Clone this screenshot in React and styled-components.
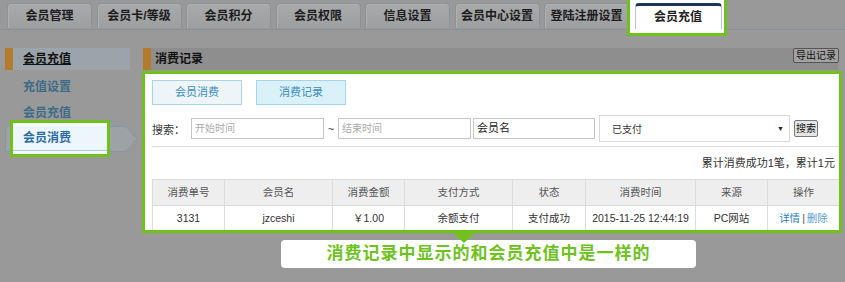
import React from 'react';
import styled, {createGlobalStyle} from 'styled-components';

const green = '#70c11c';

const GlobalStyle = createGlobalStyle`
  html, body {
    margin: 0;
    padding: 0;
    background: #999;
  }
  body {
    font-family: "Liberation Sans", "Noto Sans CJK SC", sans-serif;
  }
`;

const tabs = ['会员管理', '会员卡/等级', '会员积分', '会员权限', '信息设置', '会员中心设置', '登陆注册设置'];
const menu = ['充值设置', '会员充值'];
const columns = [
    {title: '消费单号', width: 72},
    {title: '会员名', width: 108},
    {title: '消费金额', width: 72},
    {title: '支付方式', width: 108},
    {title: '状态', width: 73},
    {title: '消费时间', width: 110},
    {title: '来源', width: 72},
    {title: '操作', width: 72},
];

const App = () => {
    return (
        <Page>
            <GlobalStyle/>
            <TabBar>
                {tabs.map((t) => <Tab key={t}>{t}</Tab>)}
                <ActiveFrame>
                    <ActiveTab>会员充值</ActiveTab>
                </ActiveFrame>
            </TabBar>

            <Body>
                <Sidebar>
                    <SideHead>会员充值</SideHead>
                    <Menu>
                        {menu.map((m) => <MenuItem key={m}>{m}</MenuItem>)}
                        <ActiveItem>
                            <svg width="133" height="26" viewBox="0 0 133 26">
                                <polygon points="0.5,0.5 121,0.5 132,13 121,25.5 0.5,25.5" fill="#9ca2a6" stroke="#8797a3"/>
                            </svg>
                            <ItemFrame>
                                <ItemBand>会员消费</ItemBand>
                            </ItemFrame>
                        </ActiveItem>
                    </Menu>
                </Sidebar>

                <Main>
                    <MainHead>
                        <HeadTitle>消费记录</HeadTitle>
                        <ExportBtn>导出记录</ExportBtn>
                    </MainHead>

                    <ContentFrame>
                        <Content>
                            <ButtonRow>
                                <SubTab>会员消费</SubTab>
                                <SubTab active>消费记录</SubTab>
                            </ButtonRow>

                            <SearchRow>
                                <Label>搜索：</Label>
                                <Field width={133} placeholder>开始时间</Field>
                                <Tilde>~</Tilde>
                                <Field width={133} placeholder>结束时间</Field>
                                <Field width={122} style={{marginLeft: 2}}>会员名</Field>
                                <Select>
                                    <span>已支付</span>
                                    <Caret>▼</Caret>
                                </Select>
                                <SearchBtn>搜索</SearchBtn>
                            </SearchRow>

                            <Divider/>
                            <Summary>累计消费成功1笔，累计1元</Summary>

                            <Table>
                                <Row head>
                                    {columns.map((c) => <Cell key={c.title} width={c.width}>{c.title}</Cell>)}
                                </Row>
                                <Row>
                                    <Cell width={72}>3131</Cell>
                                    <Cell width={108}>jzceshi</Cell>
                                    <Cell width={72}>￥1.00</Cell>
                                    <Cell width={108}>余额支付</Cell>
                                    <Cell width={73}>支付成功</Cell>
                                    <Cell width={110}>2015-11-25 12:44:19</Cell>
                                    <Cell width={72}>PC网站</Cell>
                                    <Cell width={72}>
                                        <ActionLink>详情</ActionLink>
                                        <Sep>|</Sep>
                                        <ActionLink light>删除</ActionLink>
                                    </Cell>
                                </Row>
                            </Table>
                        </Content>
                    </ContentFrame>

                    <Tip>消费记录中显示的和会员充值中是一样的</Tip>
                </Main>
            </Body>
        </Page>
    );
};

export default App;

const Page = styled.div`
  width: 845px;
  height: 282px;
  overflow: hidden;
  background: #999;
`

const TabBar = styled.div`
  display: flex;
  align-items: flex-start;
  gap: 4.5px;
  height: 26px;
  padding: 3px 0 0 7px;
  border-bottom: 1px solid #8a9298;
`

const Tab = styled.div`
  width: 85px;
  height: 25px;
  box-sizing: border-box;
  border: 1px solid #8b9298;
  border-bottom: none;
  border-radius: 4px 4px 0 0;
  background: linear-gradient(#a7a9ab, #9d9fa1);
  box-shadow: inset 1px 1px 0 #aeb0b2;
  font-size: 12px;
  font-weight: bold;
  color: #1c1c1c;
  line-height: 25px;
  text-align: center;
`

const ActiveFrame = styled.div`
  position: relative;
  z-index: 1;
  width: 100px;
  height: 36px;
  box-sizing: border-box;
  margin: -3px 0 0 -7px;
  padding: 3px 2px 0 5px;
  border: 3px solid ${green};
  border-top: none;
  background: #fff;
`

const ActiveTab = styled.div`
  height: 26px;
  box-sizing: border-box;
  border: 1px solid #b8c3ca;
  border-top: 3px solid #1d3557;
  border-bottom: none;
  border-radius: 4px 4px 0 0;
  background: #fff;
  font-size: 12px;
  font-weight: bold;
  color: #222;
  line-height: 22px;
  text-align: center;
`

const Body = styled.div`
  display: flex;
  margin-top: 18px;
`

const Sidebar = styled.div`
  width: 137px;
  padding-left: 5px;
  box-sizing: border-box;
`

const SideHead = styled.div`
  width: 125px;
  height: 22px;
  box-sizing: border-box;
  border-left: 8px solid #b47a2e;
  background: #9ba4aa;
  padding-left: 10px;
  font-size: 12px;
  font-weight: bold;
  color: #111;
  line-height: 22px;
  text-decoration: underline;
`

const Menu = styled.div`
  display: flex;
  flex-direction: column;
  margin-top: 4px;
`

const MenuItem = styled.div`
  height: 26px;
  padding-left: 18px;
  font-size: 12px;
  font-weight: bold;
  color: #3d6a87;
  line-height: 26px;
`

const ActiveItem = styled.div`
  position: relative;
  height: 26px;

  svg {
    display: block;
  }
`

const ItemFrame = styled.div`
  position: absolute;
  left: 5px;
  top: -6px;
  width: 100px;
  height: 37px;
  box-sizing: border-box;
  border: 3px solid ${green};
  background: #f6fbfd;
  padding-top: 3px;
`

const ItemBand = styled.div`
  height: 25px;
  box-sizing: border-box;
  border-bottom: 1px solid #a9cde0;
  background: #edf6fb;
  padding-left: 10px;
  font-size: 12px;
  font-weight: bold;
  color: #2a6da3;
  line-height: 25px;
`

const Main = styled.div`
  flex: 1;
  margin-left: 5px;
`

const MainHead = styled.div`
  display: flex;
  justify-content: space-between;
  align-items: flex-start;
  height: 22px;
  margin: 0 7px 0 1px;
  box-sizing: border-box;
  border-left: 8px solid #b47a2e;
  background: #8e8e8e;
`

const HeadTitle = styled.div`
  padding-left: 4px;
  font-size: 12px;
  font-weight: bold;
  color: #111;
  line-height: 22px;
`

const ExportBtn = styled.div`
  height: 15px;
  box-sizing: border-box;
  margin-right: -1px;
  padding: 0 2px;
  border: 1px solid #555;
  border-radius: 2px;
  background: #a2a2a2;
  font-size: 10px;
  color: #111;
  line-height: 13px;
`

const ContentFrame = styled.div`
  position: relative;
  width: 700px;
  margin-top: 1px;
  box-sizing: border-box;
  border: 3px solid ${green};
  background: #fff;

  &::after {
    content: '';
    position: absolute;
    left: 308px;
    top: calc(100% + 3px);
    border-left: 11px solid transparent;
    border-right: 11px solid transparent;
    border-top: 10px solid ${green};
  }
`

const Content = styled.div`
  height: 156px;
  overflow: hidden;
  padding-left: 7px;
`

const ButtonRow = styled.div`
  display: flex;
  gap: 14px;
  padding-top: 6px;
`

const SubTab = styled.div`
  width: 90px;
  height: 25px;
  box-sizing: border-box;
  border: 1px solid ${(p) => (p.active ? '#a3d6ea' : '#abd3e4')};
  background: ${(p) => (p.active ? '#dbf1f9' : '#edf5f8')};
  font-size: 11px;
  color: #3a8cbd;
  line-height: 23px;
  text-align: center;
`

const SearchRow = styled.div`
  display: flex;
  align-items: center;
  height: 27px;
  margin-top: 10px;
`

const Label = styled.div`
  width: 39px;
  font-size: 11px;
  color: #333;
`

const Field = styled.div`
  width: ${(p) => p.width}px;
  height: 21px;
  box-sizing: border-box;
  border: 1px solid #c6c6c6;
  padding-left: 3px;
  font-size: ${(p) => (p.placeholder ? '10px' : '11px')};
  color: ${(p) => (p.placeholder ? '#aaa' : '#222')};
  line-height: 19px;
`

const Tilde = styled.div`
  width: 14px;
  font-size: 11px;
  color: #333;
  text-align: center;
`

const Select = styled.div`
  display: flex;
  justify-content: space-between;
  align-items: center;
  width: 191px;
  height: 27px;
  margin-left: 4px;
  box-sizing: border-box;
  border: 1px solid #d8d8d8;
  padding: 0 5px 0 12px;
  font-size: 10px;
  color: #333;
`

const Caret = styled.span`
  font-size: 7px;
  color: #222;
`

const SearchBtn = styled.div`
  height: 17px;
  margin-left: 4px;
  box-sizing: border-box;
  padding: 0 1px;
  border: 1px solid #777;
  border-radius: 2px;
  background: #e6e6e6;
  font-size: 10px;
  color: #111;
  line-height: 15px;
`

const Divider = styled.div`
  height: 1px;
  margin-top: 4px;
  background: #dcdcdc;
`

const Summary = styled.div`
  padding: 9px 4px 0 0;
  height: 23px;
  margin-bottom: 0;
  font-size: 11px;
  color: #333;
  line-height: 14px;
  text-align: right;
`

const Table = styled.div`
  width: 687px;
  border-left: 1px solid #dcdcdc;
`

const Row = styled.div`
  display: flex;
  height: ${(p) => (p.head ? 26 : 25)}px;
  background: ${(p) => (p.head ? '#eeeeee' : '#fff')};
  border-top: 1px solid #dcdcdc;
  box-sizing: border-box;
  color: ${(p) => (p.head ? '#555' : '#333')};
`

const Cell = styled.div`
  width: ${(p) => p.width}px;
  box-sizing: border-box;
  border-right: 1px solid #dcdcdc;
  font-size: 10.5px;
  line-height: 24px;
  text-align: center;
  white-space: nowrap;
`

const ActionLink = styled.span`
  color: ${(p) => (p.light ? '#5a9fd0' : '#2a7fc0')};
`

const Sep = styled.span`
  margin: 0 2px;
  color: #555;
`

const Tip = styled.div`
  width: 415px;
  height: 28px;
  margin: 7px 0 0 139px;
  border-radius: 4px;
  background: #fff;
  font-size: 17px;
  font-weight: bold;
  color: #6ec21d;
  letter-spacing: 1px;
  line-height: 28px;
  text-align: center;
`
